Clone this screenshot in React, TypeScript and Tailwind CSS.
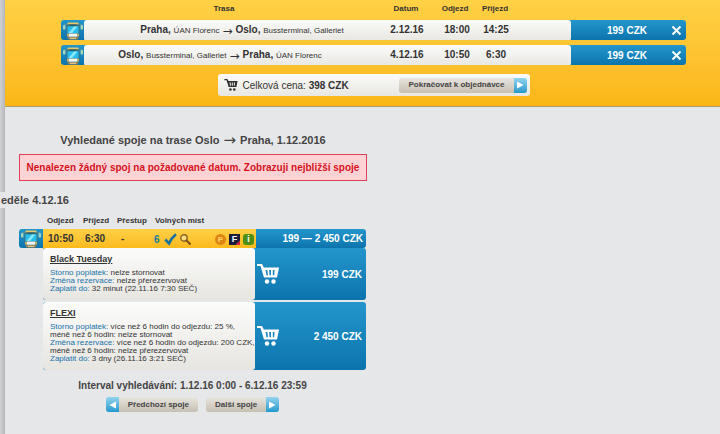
import type { ReactNode } from 'react';

const trips = [
  {
    from: 'Praha,',
    fromStop: 'ÚAN Florenc',
    to: 'Oslo,',
    toStop: 'Bussterminal, Galleriet',
    date: '2.12.16',
    departure: '18:00',
    arrival: '14:25',
    price: '199 CZK',
    align: 'pl-5',
  },
  {
    from: 'Oslo,',
    fromStop: 'Bussterminal, Galleriet',
    to: 'Praha,',
    toStop: 'ÚAN Florenc',
    date: '4.12.16',
    departure: '10:50',
    arrival: '6:30',
    price: '199 CZK',
    align: 'pr-6',
  },
];

const offers = [
  {
    name: 'Black Tuesday',
    price: '199 CZK',
    terms: [
      { label: 'Storno poplatek:', lines: ['nelze stornovat'] },
      { label: 'Změna rezervace:', lines: ['nelze přerezervovat'] },
      { label: 'Zaplatit do:', lines: ['32 minut (22.11.16 7:30 SEČ)'] },
    ],
  },
  {
    name: 'FLEXI',
    price: '2 450 CZK',
    terms: [
      { label: 'Storno poplatek:', lines: ['více než 6 hodin do odjezdu: 25 %,', 'méně než 6 hodin: nelze stornovat'] },
      { label: 'Změna rezervace:', lines: ['více než 6 hodin do odjezdu: 200 CZK,', 'méně než 6 hodin: nelze přerezervovat'] },
      { label: 'Zaplatit do:', lines: ['3 dny (26.11.16 3:21 SEČ)'] },
    ],
  },
];

function BusIcon() {
  return (
    <svg width="22" height="18" viewBox="0 0 22 18" className="shrink-0" aria-hidden="true">
      <path d="M5 2.500H2.500v1M17 2.500h2.500v1" fill="none" stroke="#6b98a0" strokeWidth="0.800" />
      <rect x="1" y="3" width="2.400" height="4.500" rx="0.800" fill="#a9d3b4" />
      <rect x="18.600" y="3" width="2.400" height="4.500" rx="0.800" fill="#a9d3b4" />
      <rect x="4.500" y="1" width="13" height="15" rx="1.500" fill="#3b7482" />
      <path d="M6 .5h10l1 1.800H5z" fill="#e6c86c" />
      <rect x="7.500" y="2.600" width="7" height="1.200" fill="#2b5563" />
      <rect x="5.500" y="4.200" width="11" height="7" rx="0.500" fill="#27bdec" />
      <path d="M6.500 11 12 4.500h3.500l-5.500 6.500z" fill="#86e8fa" />
      <path d="M5.500 11.200h11v4h-11z" fill="#7fa7ab" />
      <rect x="7" y="11.700" width="8" height="2.800" rx="0.500" fill="#f3f5f2" />
      <path d="M5 12.200h1.700v1.500H5zM15.300 12.200H17v1.500h-1.700z" fill="#f2b548" />
      <path d="M5.500 15.200h11l-1 2.300h-9z" fill="#a58249" />
      <path d="M8 15.800h6v1H8z" fill="#e9d9a8" />
    </svg>
  );
}

function CartIcon({ className }: { className: string }) {
  return (
    <svg viewBox="0 0 22 20" className={className} fill="currentColor" aria-hidden="true">
      <path
        fillRule="evenodd"
        d="M0 0h5l1.800 3.500H22L20 13.500H7L3.500 2H0zM8.500 6l1 5.200h1.500L10.300 6zM12.200 6l.3 5.200h1.500V6zM15.800 6v5.200h1.400l.4-5.200z"
      />
      <circle cx="10" cy="17.500" r="2.200" />
      <circle cx="16.500" cy="17.500" r="2.200" />
    </svg>
  );
}

function RemoveIcon() {
  return (
    <svg width="11" height="11" viewBox="0 0 11 11" aria-hidden="true">
      <path d="m1.500 1.500 8 8M9.500 1.500l-8 8" stroke="#fff" strokeWidth="2" />
    </svg>
  );
}

function CheckIcon() {
  return (
    <svg width="13" height="13" viewBox="0 0 13 13" aria-hidden="true">
      <path d="M1.300 6.500 5 10.500C6.500 7 8.800 3.800 12 1.300" fill="none" stroke="#16719c" strokeWidth="2.600" />
    </svg>
  );
}

function MagnifierIcon() {
  return (
    <svg width="11" height="11" viewBox="0 0 11 11" fill="none" aria-hidden="true">
      <circle cx="4" cy="4" r="3.200" stroke="#8a6420" strokeWidth="1.400" fill="#f9dd80" />
      <path d="m6.400 6.400 3.600 3.600" stroke="#7b4a1c" strokeWidth="1.900" strokeLinecap="round" />
    </svg>
  );
}

function ArrowBox({ direction }: { direction: 'left' | 'right' }) {
  return (
    <span className="flex w-[13px] items-center justify-center self-stretch bg-linear-to-b from-[#8fd3ee] to-[#1a9acd]">
      <svg width="7" height="8" viewBox="0 0 7 8" aria-hidden="true">
        <path d={direction === 'left' ? 'M7 0.500v7L0.500 4z' : 'M0 0.500v7L6.500 4z'} fill="#fff" />
      </svg>
    </span>
  );
}

function GrayButton({ arrow, children }: { arrow: 'left' | 'right'; children: ReactNode }) {
  return (
    <button
      type="button"
      className="flex h-[15px] items-center overflow-hidden rounded-[3px] bg-linear-to-b from-[#e9e5df] to-[#c6bfb2] text-[8px] leading-3 font-bold text-[#444]"
    >
      {arrow === 'left' && <ArrowBox direction="left" />}
      <span className="px-[9px]">{children}</span>
      {arrow === 'right' && <ArrowBox direction="right" />}
    </button>
  );
}

function TripTable() {
  return (
    <table className="block w-full text-[10px] font-bold text-[#333]">
      <thead className="block">
        <tr className="grid h-5 grid-cols-[23px_1fr_52px_46px_34px_59px_115px] pt-[5px] text-center text-[8px] leading-2">
          <th />
          <th className="pr-4">Trasa</th>
          <th>Datum</th>
          <th>Odjezd</th>
          <th>Příjezd</th>
          <th />
          <th />
        </tr>
      </thead>
      <tbody className="flex flex-col gap-[5px]">
        {trips.map((trip) => (
          <tr
            key={trip.date}
            className="grid h-5 grid-cols-[23px_1fr_54px_46px_91px_115px] overflow-hidden rounded-[3px] bg-linear-to-b from-[#2396cc] to-[#0c74ad] text-center leading-5"
          >
            <td className="flex items-center justify-center p-0">
              <BusIcon />
            </td>
            <td
              className={`flex items-center justify-center gap-[3px] rounded-l-[3px] bg-linear-to-b from-[#fbfbfa] to-[#e8e7e1] whitespace-nowrap ${trip.align}`}
            >
              <span>
                {trip.from} <span className="text-[8px] font-normal">{trip.fromStop}</span>
              </span>
              <span className="font-['DejaVu_Sans'] text-[12px] leading-none font-normal">→</span>
              <span>
                {trip.to} <span className="text-[8px] font-normal">{trip.toStop}</span>
              </span>
            </td>
            <td className="bg-linear-to-b from-[#fbfbfa] to-[#e8e7e1] p-0">{trip.date}</td>
            <td className="bg-linear-to-b from-[#fbfbfa] to-[#e8e7e1] p-0">{trip.departure}</td>
            <td className="rounded-r-[3px] bg-linear-to-b from-[#fbfbfa] to-[#e8e7e1] py-0 pr-[59px]">{trip.arrival}</td>
            <td className="flex items-center justify-between py-0 pr-1 pl-9 text-white">
              {trip.price}
              <button type="button" aria-label="Odebrat">
                <RemoveIcon />
              </button>
            </td>
          </tr>
        ))}
      </tbody>
    </table>
  );
}

function ConnectionTable() {
  return (
    <table className="block w-full text-[10px] font-bold text-[#333]">
      <thead className="block">
        <tr className="grid h-[13px] grid-cols-[28px_36px_34px_38px_1fr] pt-px text-left text-[8px] leading-2">
          <th />
          <th>Odjezd</th>
          <th>Příjezd</th>
          <th>Přestup</th>
          <th>Volných míst</th>
        </tr>
      </thead>
      <tbody className="block">
        <tr className="grid h-[19px] grid-cols-[24px_42px_30px_34px_1fr_110px] leading-[19px]">
          <td className="mb-px flex items-center justify-center rounded-l-[3px] bg-linear-to-b from-[#2396cc] to-[#0c74ad] p-0">
            <BusIcon />
          </td>
          <td className="bg-linear-to-b from-[#ffd045] to-[#fbb917] pl-[5px]">10:50</td>
          <td className="bg-linear-to-b from-[#ffd045] to-[#fbb917]">6:30</td>
          <td className="bg-linear-to-b from-[#ffd045] to-[#fbb917] pl-1.5">-</td>
          <td className="flex items-center bg-linear-to-b from-[#ffd045] to-[#fbb917] pr-0.5 pl-[5px]">
            <span className="text-[#1a7a9a]">6</span>
            <span className="ml-1 flex items-center gap-[3px]">
              <CheckIcon />
              <MagnifierIcon />
            </span>
            <span className="ml-auto flex items-center gap-[3px] text-[9px] leading-[11px] text-white">
              <span className="h-[11px] w-[11px] rounded-full bg-[#dd8412] text-center text-[8px] text-[#ffd56b]">P</span>
              <span className="h-[11px] w-[11px] bg-linear-135 from-[#1b1b3a] from-75% to-[#e0203a] to-85% text-center">F</span>
              <span className="h-[11px] w-[11px] rounded-[3px] bg-[#4f8f16] text-center">i</span>
            </span>
          </td>
          <td className="mb-px rounded-r-[3px] bg-linear-to-b from-[#2396cc] to-[#0c74ad] pr-[3px] text-right text-white">
            199 — 2 450 CZK
          </td>
        </tr>
      </tbody>
    </table>
  );
}

function OfferCard({ offer }: { offer: (typeof offers)[number] }) {
  return (
    <article className="grid grid-cols-[212px_1fr] overflow-hidden rounded-[3px] bg-linear-to-b from-[#2396cc] to-[#0c74ad]">
      <div className="rounded-[3px] bg-linear-to-b from-[#fcfcfb] to-[#e6e5e0] pt-[5px] pb-[7px] pl-[7px] text-[#333]">
        <a href="#rezervace" className="block text-[9px] leading-3 font-bold underline">
          {offer.name}
        </a>
        <ul className="mt-1 text-[8px] leading-2 whitespace-nowrap">
          {offer.terms.map((term) => (
            <li key={term.label}>
              <span className="text-[#1872ab]">{term.label}</span>{' '}
              {term.lines.map((line) => (
                <span key={line}>
                  {line}
                  <br />
                </span>
              ))}
            </li>
          ))}
        </ul>
      </div>
      <button type="button" className="flex items-center justify-between pr-1 pl-0.5 text-[10px] font-bold text-white">
        <CartIcon className="h-5 w-[22px]" />
        {offer.price}
      </button>
    </article>
  );
}

export default function App() {
  return (
    <div className="min-h-screen bg-[#e6e7e9] bg-[linear-gradient(to_right,#cfd1d3,#b4b6b9)] bg-[length:5px_100%] bg-no-repeat font-['Liberation_Sans',Arial,sans-serif]">
      <header className="ml-[5px] border-b border-[#a8a07c] bg-linear-to-b from-[#ffd145] to-[#fbb614] pr-[34px] pb-[10px] pl-14">
        <TripTable />
        <div className="mx-auto mt-[9px] flex h-[22px] w-[312px] items-center rounded-[3px] bg-linear-to-b from-[#fbfbfa] to-[#e8e7e1] pr-[3px] pl-1.5 text-[10px] text-[#333]">
          <CartIcon className="h-3 w-3.5" />
          <span className="ml-[5px]">
            Celková cena: <strong>398 CZK</strong>
          </span>
          <span className="ml-auto">
            <GrayButton arrow="right">Pokračovat k objednávce</GrayButton>
          </span>
        </div>
      </header>

      <main className="text-[#444]">
        <div className="ml-[19px] max-w-[348px] pt-[25px]">
          <h1 className="flex items-center justify-center gap-1 text-[11px] leading-4 font-bold">
            Vyhledané spoje na trase Oslo
            <span className="font-['DejaVu_Sans'] text-[15px] leading-none font-normal">→</span>
            Praha, 1.12.2016
          </h1>
          <p className="mt-1.5 border border-[#e0405a] bg-[#fcd3d5] text-center text-[10px] leading-[25px] font-bold whitespace-nowrap text-[#d3121f]">
            Nenalezen žádný spoj na požadované datum. Zobrazuji nejbližší spoje
          </p>
        </div>

        <h2 className="mt-[11px] bg-[#e6e7e9] pl-px text-[11px] leading-4 font-bold">eděle 4.12.16</h2>

        <div className="ml-[19px] max-w-[347px] pt-2">
          <ConnectionTable />
          <div className="ml-6 flex flex-col gap-0.5">
            {offers.map((offer) => (
              <OfferCard key={offer.name} offer={offer} />
            ))}
          </div>
          <p className="mt-2 text-center text-[10px] leading-4 font-bold">
            Interval vyhledávání: 1.12.16 0:00 - 6.12.16 23:59
          </p>
          <div className="mt-[3px] flex justify-center gap-2">
            <GrayButton arrow="left">Předchozí spoje</GrayButton>
            <GrayButton arrow="right">Další spoje</GrayButton>
          </div>
        </div>
      </main>
    </div>
  );
}
